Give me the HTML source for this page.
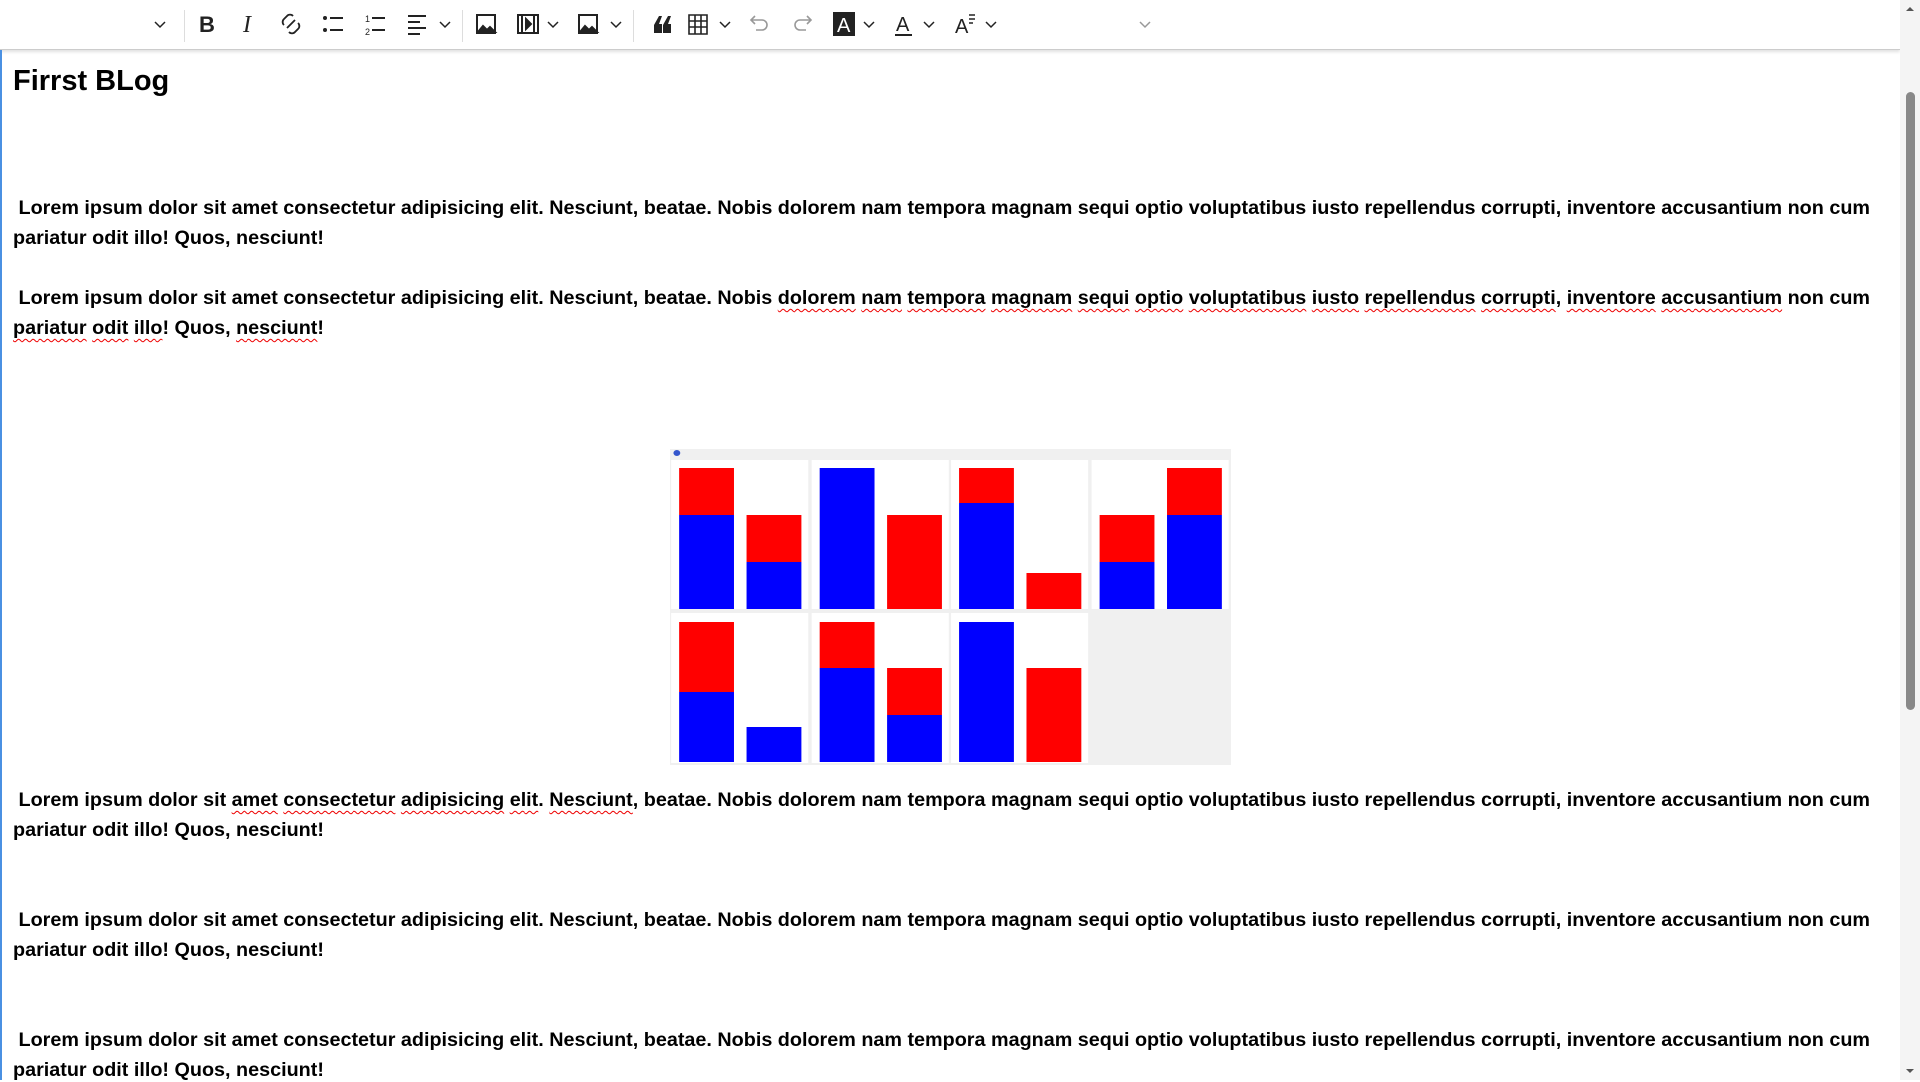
<!DOCTYPE html>
<html><head><meta charset="utf-8">
<style>
html,body{margin:0;padding:0;width:1920px;height:1080px;overflow:hidden;background:#fff;font-family:"Liberation Sans",Arial,sans-serif;}
.tb{position:absolute;left:0;top:0;width:1900px;height:49px;background:#fff;border-bottom:1px solid #ccc;box-shadow:0 2px 3px rgba(0,0,0,.12);}
.sep{position:absolute;top:10px;width:1px;height:32px;background:#ddd;}
.ed{position:absolute;left:0;top:50px;width:1900px;height:1030px;border-left:2px solid #4a90e2;box-sizing:border-box;}
h1{position:absolute;left:13px;top:65px;margin:0;font-size:29px;font-weight:bold;color:#000;}
.ln{position:absolute;white-space:nowrap;font-weight:bold;font-size:19px;color:#000;transform-origin:0 0;}
.sp{text-decoration:underline wavy #e00;text-decoration-thickness:1px;text-underline-offset:4px;}
.sb{position:absolute;left:1900px;top:0;width:20px;height:1080px;background:#f4f4f4;}
.th{position:absolute;left:1906px;top:92px;width:9px;height:618px;background:#888;border-radius:5px;}
</style></head><body>
<div class="tb">
<svg width="1900" height="49" style="position:absolute;left:0;top:0" fill="none" stroke="#222" stroke-width="2">
<g stroke-width="1.5"><path d="M155 22l5 5 5-5"/><path d="M440 22l5 5 5-5"/><path d="M548 22l5 5 5-5"/><path d="M611 22l5 5 5-5"/><path d="M720 22l5 5 5-5"/><path d="M864 22l5 5 5-5"/><path d="M924 22l5 5 5-5"/><path d="M986 22l5 5 5-5"/><path d="M1140 22l5 5 5-5" stroke="#999"/></g>
<text x="199" y="32" font-family="Liberation Sans" font-weight="bold" font-size="22" fill="#222" stroke="none">B</text>
<text x="243" y="32" font-family="Liberation Serif" font-style="italic" font-size="24" fill="#222" stroke="none">I</text>
<path d="M287 28l8-8M284 25a4 4 0 0 1 0-6l3-3a4 4 0 0 1 6 0M298 23a4 4 0 0 1 0 6l-3 3a4 4 0 0 1-6 0" stroke-width="1.8"/>
<g fill="#222" stroke="none"><circle cx="325" cy="18" r="2"/><circle cx="325" cy="30" r="2"/><rect x="330" y="17" width="13" height="2"/><rect x="330" y="29" width="13" height="2"/>
<rect x="372" y="17" width="13" height="2"/><rect x="372" y="29" width="13" height="2"/>
<rect x="408" y="15" width="18" height="2"/><rect x="408" y="21" width="12" height="2"/><rect x="408" y="27" width="18" height="2"/><rect x="408" y="33" width="12" height="2"/>
<text x="365" y="22" font-size="9" font-family="Liberation Sans">1</text><text x="365" y="35" font-size="9" font-family="Liberation Sans">2</text>
<path d="M654 33v-8l5-9h3l-3 8h3v9zM663 33v-8l5-9h3l-3 8h3v9z"/>
</g>
<path d="M477 15h18v18h-18z"/><path d="M478 32l5-6 4 4 3-3 5 5z" fill="#222"/>
<path d="M579 15h18v18h-18z"/><path d="M580 32l5-6 4 4 3-3 5 5z" fill="#222"/>
<path d="M518 15h20v18h-20z M522 15v18M534 15v18"/><path d="M526 19l5 5-5 5z" fill="#222"/>
<path d="M689 15h18v19h-18zM689 21h18M689 27h18M695 15v19M701 15v19" stroke-width="1.6"/>
<path d="M752 20h10a5 5 0 0 1 0 10h-6M755 16l-4 4 4 4" stroke="#999" stroke-width="1.6"/>
<path d="M810 20h-10a5 5 0 0 0 0 10h6M807 16l4 4-4 4" stroke="#999" stroke-width="1.6"/>
<rect x="834" y="13" width="20" height="22" fill="#222"/>
<text x="837" y="32" font-family="Liberation Sans" font-size="20" fill="#fff" stroke="none">A</text>
<text x="896" y="31" font-family="Liberation Sans" font-size="20" fill="#222" stroke="none">A</text><path d="M895 35h17"/>
<text x="955" y="33" font-family="Liberation Sans" font-size="20" fill="#222" stroke="none">A</text><path d="M969 15h6M969 19h6M969 23h4" stroke-width="1.5"/>
</svg>
<div class="sep" style="left:184px"></div><div class="sep" style="left:462px"></div><div class="sep" style="left:633px"></div>
</div>
<div class="ed"></div>
<h1>Firrst BLog</h1>

<div class="ln" style="left:13px;top:198px" data-w="1857">&nbsp;Lorem ipsum dolor sit amet consectetur adipisicing elit. Nesciunt, beatae. Nobis dolorem nam tempora magnam sequi optio voluptatibus iusto repellendus corrupti, inventore accusantium non cum</div>
<div class="ln" style="left:13px;top:228px">pariatur odit illo! Quos, nesciunt!</div>

<div class="ln" style="left:13px;top:288px" data-w="1857">&nbsp;Lorem ipsum dolor sit amet consectetur adipisicing elit. Nesciunt, beatae. Nobis <span class="sp">dolorem</span> <span class="sp">nam</span> <span class="sp">tempora</span> <span class="sp">magnam</span> <span class="sp">sequi</span> <span class="sp">optio</span> <span class="sp">voluptatibus</span> <span class="sp">iusto</span> <span class="sp">repellendus</span> <span class="sp">corrupti</span>, <span class="sp">inventore</span> <span class="sp">accusantium</span> non cum</div>
<div class="ln" style="left:13px;top:318px"><span class="sp">pariatur</span> <span class="sp">odit</span> <span class="sp">illo</span>! Quos, <span class="sp">nesciunt</span>!</div>

<svg style="position:absolute;left:670px;top:449px" width="561" height="316" viewBox="667 449 491 316" preserveAspectRatio="none">
<rect x="667" y="449" width="491" height="316" fill="#f0f0f0"/>
<circle cx="673" cy="453" r="3" fill="#3355cc"/>
<g fill="#fff"><rect x="668" y="460" width="120" height="149"/><rect x="791" y="460" width="120" height="149"/><rect x="913" y="460" width="120" height="149"/><rect x="1036" y="460" width="120" height="149"/>
<rect x="668" y="613" width="120" height="150"/><rect x="791" y="613" width="120" height="150"/><rect x="913" y="613" width="120" height="150"/></g>
<g>
<rect x="675" y="468" width="48" height="47" fill="red"/><rect x="675" y="515" width="48" height="94" fill="blue"/>
<rect x="734" y="515" width="48" height="47" fill="red"/><rect x="734" y="562" width="48" height="47" fill="blue"/>
<rect x="798" y="468" width="48" height="141" fill="blue"/>
<rect x="857" y="515" width="48" height="94" fill="red"/>
<rect x="920" y="468" width="48" height="35" fill="red"/><rect x="920" y="503" width="48" height="106" fill="blue"/>
<rect x="979" y="573" width="48" height="36" fill="red"/>
<rect x="1043" y="515" width="48" height="47" fill="red"/><rect x="1043" y="562" width="48" height="47" fill="blue"/>
<rect x="1102" y="468" width="48" height="47" fill="red"/><rect x="1102" y="515" width="48" height="94" fill="blue"/>
<rect x="675" y="622" width="48" height="70" fill="red"/><rect x="675" y="692" width="48" height="70" fill="blue"/>
<rect x="734" y="727" width="48" height="35" fill="blue"/>
<rect x="798" y="622" width="48" height="46" fill="red"/><rect x="798" y="668" width="48" height="94" fill="blue"/>
<rect x="857" y="668" width="48" height="47" fill="red"/><rect x="857" y="715" width="48" height="47" fill="blue"/>
<rect x="920" y="622" width="48" height="140" fill="blue"/>
<rect x="979" y="668" width="48" height="94" fill="red"/>
</g></svg>

<div class="ln" style="left:13px;top:790px" data-w="1857">&nbsp;Lorem ipsum dolor sit <span class="sp">amet</span> <span class="sp">consectetur</span> <span class="sp">adipisicing</span> <span class="sp">elit</span>. <span class="sp">Nesciunt</span>, beatae. Nobis dolorem nam tempora magnam sequi optio voluptatibus iusto repellendus corrupti, inventore accusantium non cum</div>
<div class="ln" style="left:13px;top:820px">pariatur odit illo! Quos, nesciunt!</div>

<div class="ln" style="left:13px;top:910px" data-w="1857">&nbsp;Lorem ipsum dolor sit amet consectetur adipisicing elit. Nesciunt, beatae. Nobis dolorem nam tempora magnam sequi optio voluptatibus iusto repellendus corrupti, inventore accusantium non cum</div>
<div class="ln" style="left:13px;top:940px">pariatur odit illo! Quos, nesciunt!</div>

<div class="ln" style="left:13px;top:1030px" data-w="1857">&nbsp;Lorem ipsum dolor sit amet consectetur adipisicing elit. Nesciunt, beatae. Nobis dolorem nam tempora magnam sequi optio voluptatibus iusto repellendus corrupti, inventore accusantium non cum</div>
<div class="ln" style="left:13px;top:1060px">pariatur odit illo! Quos, nesciunt!</div>

<div class="sb"></div><div class="th"></div>
<svg style="position:absolute;left:1903px;top:4px" width="14" height="10"><path d="M3 7l4-4 4 4" fill="#555"/></svg>
<svg style="position:absolute;left:1903px;top:1066px" width="14" height="10"><path d="M3 3l4 4 4-4" fill="#555"/></svg>
<script>
var f=null;
document.querySelectorAll('.ln[data-w]').forEach(function(e){var s=parseFloat(e.dataset.w)/e.getBoundingClientRect().width;f=s;e.style.transform='scaleX('+s+')';});
document.querySelectorAll('.ln:not([data-w])').forEach(function(e){if(f)e.style.transform='scaleX('+f+')';});
</script>
</body></html>
